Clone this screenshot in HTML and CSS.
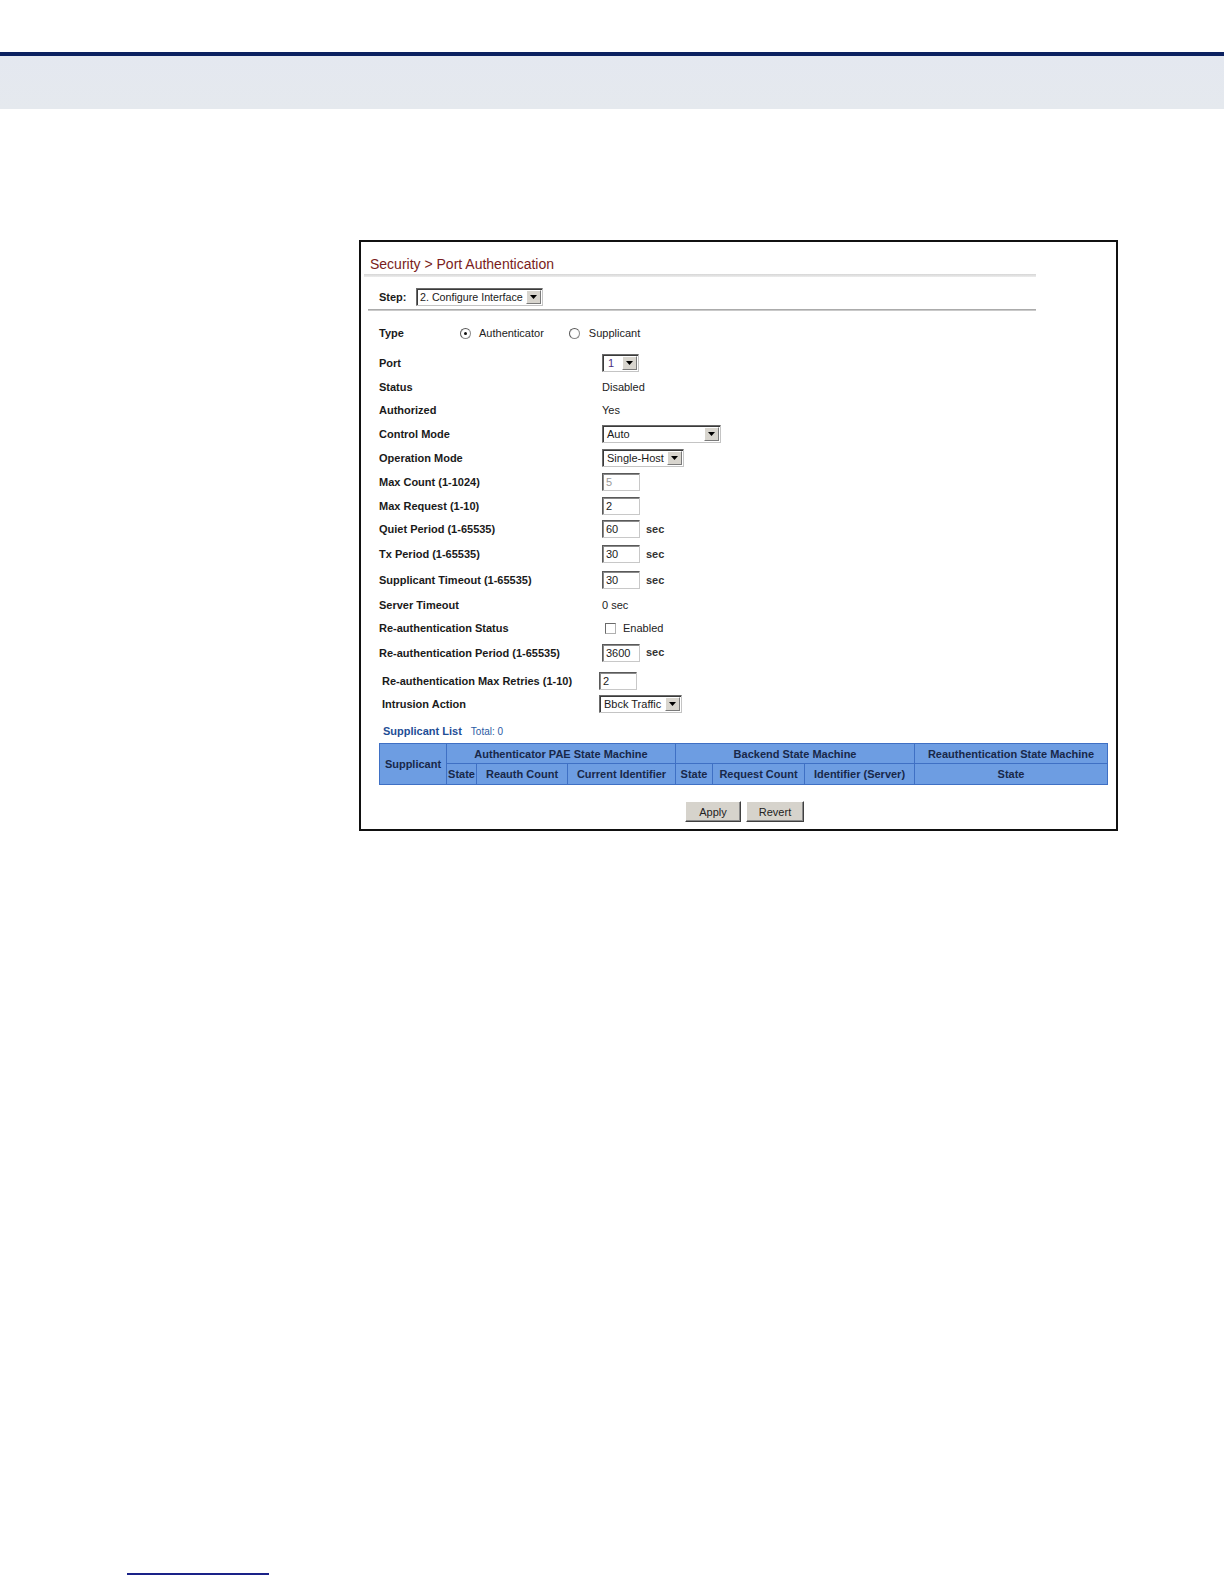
FILE: index.html
```html
<!DOCTYPE html>
<html>
<head>
<meta charset="utf-8">
<link rel="stylesheet" href="styles.css">
</head>
<body>
<div class="top-rule"></div>
<div class="band"></div>

<div class="panel">
  <div class="title">Security &gt; Port Authentication</div>
  <div class="title-rule"></div>
  <div class="step-row">
    <span class="step-label">Step:</span>
    <span class="select w-step"><span class="sel-text">2. Configure Interface</span><span class="sel-btn"><svg width="7" height="4" viewBox="0 0 7 4"><path d="M0 0H7L3.5 4Z" fill="#000"/></svg></span></span>
  </div>
  <div class="step-rule"></div>

  <div class="form">
    <div class="row">
      <span class="label w-type">Type</span>
      <span class="radio checked"></span><span class="opt">Authenticator</span>
      <span class="radio second"></span><span class="opt">Supplicant</span>
    </div>
    <div class="row m6">
      <span class="label">Port</span>
      <span class="select w-port"><span class="sel-text port-val">1</span><span class="sel-btn"><svg width="7" height="4" viewBox="0 0 7 4"><path d="M0 0H7L3.5 4Z" fill="#000"/></svg></span></span>
    </div>
    <div class="row">
      <span class="label">Status</span><span class="val">Disabled</span>
    </div>
    <div class="row mn1">
      <span class="label">Authorized</span><span class="val">Yes</span>
    </div>
    <div class="row">
      <span class="label">Control Mode</span>
      <span class="select w-control"><span class="sel-text">Auto</span><span class="sel-btn"><svg width="7" height="4" viewBox="0 0 7 4"><path d="M0 0H7L3.5 4Z" fill="#000"/></svg></span></span>
    </div>
    <div class="row">
      <span class="label">Operation Mode</span>
      <span class="select w-op"><span class="sel-text">Single-Host</span><span class="sel-btn"><svg width="7" height="4" viewBox="0 0 7 4"><path d="M0 0H7L3.5 4Z" fill="#000"/></svg></span></span>
    </div>
    <div class="row">
      <span class="label">Max Count (1-1024)</span><span class="input disabled">5</span>
    </div>
    <div class="row">
      <span class="label">Max Request (1-10)</span><span class="input">2</span>
    </div>
    <div class="row mn1">
      <span class="label">Quiet Period (1-65535)</span><span class="input">60</span><span class="unit">sec</span>
    </div>
    <div class="row m1">
      <span class="label">Tx Period (1-65535)</span><span class="input">30</span><span class="unit">sec</span>
    </div>
    <div class="row m2">
      <span class="label">Supplicant Timeout (1-65535)</span><span class="input">30</span><span class="unit">sec</span>
    </div>
    <div class="row m1">
      <span class="label">Server Timeout</span><span class="val">0 sec</span>
    </div>
    <div class="row mn1">
      <span class="label">Re-authentication Status</span><span class="check"></span><span class="opt">Enabled</span>
    </div>
    <div class="row m1">
      <span class="label">Re-authentication Period (1-65535)</span><span class="input">3600</span><span class="unit up">sec</span>
    </div>
    <div class="row m4 shifted">
      <span class="label">Re-authentication Max Retries (1-10)</span><span class="input">2</span>
    </div>
    <div class="row mn1 shifted">
      <span class="label">Intrusion Action</span>
      <span class="select w-intr"><span class="sel-text">Bbck Traffic</span><span class="sel-btn"><svg width="7" height="4" viewBox="0 0 7 4"><path d="M0 0H7L3.5 4Z" fill="#000"/></svg></span></span>
    </div>
  </div>

  <div class="list-head"><span class="list-title">Supplicant List</span><span class="list-total">Total: 0</span></div>

  <table class="grid">
    <colgroup>
      <col class="c67"><col class="c30"><col class="c91"><col class="c108"><col class="c37"><col class="c92"><col class="c110"><col class="c193">
    </colgroup>
    <tr class="r1">
      <th rowspan="2">Supplicant</th>
      <th colspan="3">Authenticator PAE State Machine</th>
      <th colspan="3">Backend State Machine</th>
      <th>Reauthentication State Machine</th>
    </tr>
    <tr class="r2">
      <th>State</th>
      <th>Reauth Count</th>
      <th>Current Identifier</th>
      <th>State</th>
      <th>Request Count</th>
      <th>Identifier (Server)</th>
      <th>State</th>
    </tr>
  </table>

  <div class="buttons">
    <span class="btn w-apply">Apply</span>
    <span class="btn w-revert">Revert</span>
  </div>
</div>

<div class="foot-rule"></div>
</body>
</html>
```
FILE: styles.css
```css
* { box-sizing: border-box; }
html, body { margin: 0; padding: 0; background: #fff; }
body {
  width: 1224px;
  height: 1584px;
  font-family: "Liberation Sans", Arial, sans-serif;
  font-size: 11px;
  color: #1a1a1a;
  overflow: hidden;
}

.top-rule {
  margin-top: 52px;
  height: 4px;
  background: #0b2160;
}
.band {
  height: 53px;
  background: linear-gradient(#e4e8f0, #e5e9ee);
}

.panel {
  margin: 131px 0 0 359px;
  width: 759px;
  height: 591px;
  border: 2px solid #111;
}

.title {
  height: 32px;
  padding: 14px 0 0 9px;
  font-size: 14px;
  line-height: 16px;
  color: #7a1c20;
}
.title-rule {
  margin-left: 3px;
  width: 672px;
  height: 3px;
  background: linear-gradient(#d6d6d6, #ececec);
}

.step-row {
  height: 32px;
  padding: 8px 0 0 18px;
  display: flex;
  align-items: center;
}
.step-row .step-label {
  font-weight: bold;
  width: 37px;
  height: 24px;
  line-height: 24px;
}
.step-rule {
  margin-left: 7px;
  width: 668px;
  height: 2px;
  background: linear-gradient(#9c9c9c, #d8d8d8);
}

.form { padding-top: 10px; }
.row {
  height: 24px;
  display: flex;
  align-items: center;
  padding-left: 18px;
}
.row.m1 { margin-top: 1px; }
.row.m2 { margin-top: 2px; }
.row.m4 { margin-top: 4px; }
.row.m6 { margin-top: 6px; }
.row.mn1 { margin-top: -1px; }
.row.shifted { padding-left: 21px; }

.label {
  width: 223px;
  font-weight: bold;
  flex: none;
}
.row.shifted .label { width: 217px; }
.label.w-type { width: 81px; }

.val { color: #222; }

.radio {
  width: 11px;
  height: 11px;
  border-radius: 50%;
  border: 1px solid #8a8a8a;
  border-top-color: #5a5a5a;
  border-left-color: #5a5a5a;
  background: radial-gradient(circle at 60% 60%, #fff 55%, #e6e6e6);
  flex: none;
  position: relative;
  margin-right: 8px;
}
.radio.checked::after {
  content: "";
  position: absolute;
  left: 3px;
  top: 3px;
  width: 3px;
  height: 3px;
  border-radius: 50%;
  background: #111;
}
.radio.second { margin-left: 25px; margin-right: 9px; }
.opt { color: #222; }

.check {
  width: 11px;
  height: 11px;
  margin: 0 7px 0 3px;
  border: 1px solid #6a6a6a;
  border-right-color: #b0b0b0;
  border-bottom-color: #b0b0b0;
  background: #fff;
  flex: none;
}

.select {
  display: inline-flex;
  align-items: center;
  height: 18px;
  border: 1px solid #6b6b6b;
  border-right-color: #c4c4c4;
  border-bottom-color: #c4c4c4;
  box-shadow: inset 1px 1px 0 #3a3a3a;
  background: #fff;
  flex: none;
}
.sel-text {
  flex: 1;
  padding-left: 4px;
  white-space: nowrap;
  overflow: hidden;
  color: #1a1a1a;
}
.w-step .sel-text { padding-left: 3px; font-size: 10.7px; }
.port-val { color: #4a2f80; padding-left: 5px; }
.sel-btn {
  width: 15px;
  height: 14px;
  margin-right: 1px;
  background: #d8d5ce;
  border: 1px solid #fff;
  border-right-color: #7a7a7a;
  border-bottom-color: #7a7a7a;
  display: flex;
  align-items: center;
  justify-content: center;
  flex: none;
}
.w-step { width: 127px; }
.w-port { width: 37px; }
.w-control { width: 119px; }
.w-op { width: 82px; }
.w-intr { width: 83px; }

.input {
  display: inline-flex;
  align-items: center;
  width: 38px;
  height: 18px;
  padding-left: 3px;
  border: 1px solid #5a5a5a;
  border-right-color: #c8c8c8;
  border-bottom-color: #c8c8c8;
  box-shadow: inset 1px 1px 0 #8a8a8a;
  background: #fff;
  color: #1a1a1a;
  flex: none;
}
.input.disabled { color: #9a9a9a; }
.unit {
  margin-left: 6px;
  font-weight: bold;
  color: #333;
}
.unit.up { position: relative; top: -1px; }

.list-head {
  margin-top: 5px;
  height: 20px;
  padding-left: 22px;
  display: flex;
  align-items: center;
}
.list-title {
  font-weight: bold;
  color: #1f4e96;
}
.list-total {
  margin-left: 9px;
  font-size: 10px;
  color: #2b5ba4;
}

.grid {
  margin: 2px 0 0 18px;
  width: 728px;
  border-collapse: collapse;
  table-layout: fixed;
}
.c67 { width: 67px; }
.c30 { width: 30px; }
.c91 { width: 91px; }
.c108 { width: 108px; }
.c37 { width: 37px; }
.c92 { width: 92px; }
.c110 { width: 110px; }
.c193 { width: 193px; }
.grid th {
  padding: 0;
  background: #6d9de2;
  border: 1px solid #3f70c4;
  color: #18284a;
  font-weight: bold;
  font-size: 11px;
  text-align: center;
  white-space: nowrap;
}
.grid .r1 th { height: 20px; }
.grid .r2 th { height: 21px; }

.buttons {
  margin: 16px 0 0 18px;
  width: 728px;
  display: flex;
  justify-content: center;
  gap: 5px;
  padding-left: 3px;
}
.btn {
  height: 21px;
  display: flex;
  align-items: center;
  justify-content: center;
  background: #d6d3cc;
  border: 1px solid #fff;
  border-right-color: #404040;
  border-bottom-color: #404040;
  box-shadow: inset -1px -1px 0 #8a8a8a;
  color: #222;
}
.w-apply { width: 56px; }
.w-revert { width: 58px; }

.foot-rule {
  margin: 742px 0 0 127px;
  width: 142px;
  height: 2px;
  background: #1a2288;
}
```
